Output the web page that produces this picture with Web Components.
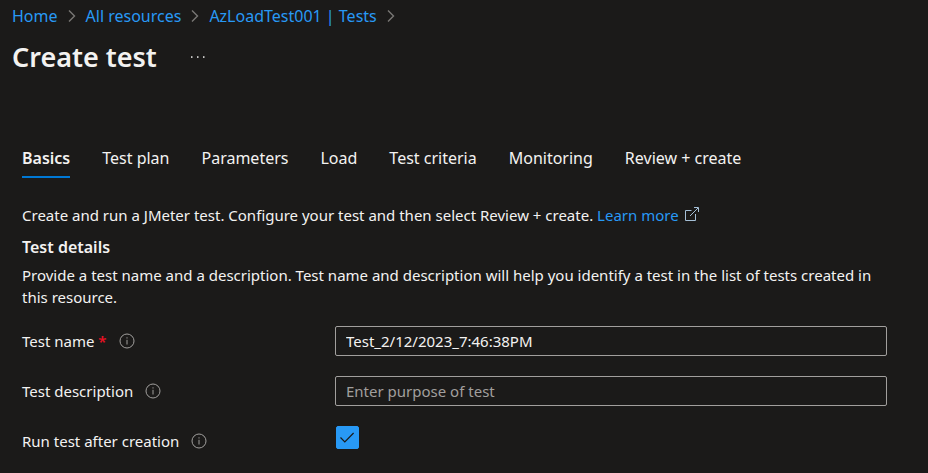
<!DOCTYPE html>
<html lang="en">
<head>
<meta charset="utf-8">
<meta name="viewport" content="width=device-width, initial-scale=1.0">
<title>Create test</title>
<style>
html {
  --bg: #1b1a19;
  --text: #f3f2f1;
  --link: #2899f5;
  --accent: #0078d4;
  --border: #a19f9d;
}
body {
  margin: 0;
  background: var(--bg);
  color: var(--text);
  font: 15px/22px "Noto Sans", "Open Sans", sans-serif;
}
</style>
</head>
<body>

<create-test-page></create-test-page>

<template id="crumb-item-template">
  <style>
    :host {
      display: flex;
      align-items: center;
      gap: 10px;
    }
    a {
      color: var(--link);
      text-decoration: none;
    }
    svg {
      display: block;
      stroke: #797775;
      fill: none;
    }
  </style>
  <a href="#"><slot></slot></a>
  <svg width="8" height="14" viewBox="0 0 8 14" stroke-width="1.4" aria-hidden="true">
    <path d="M1 1.5l5.5 5.5-5.5 5.5"/>
  </svg>
</template>

<template id="page-header-template">
  <style>
    :host {
      display: flex;
      align-items: center;
      gap: 32px;
    }
    h1 {
      margin: 0;
      font-size: 27px;
      line-height: 36px;
      font-weight: 600;
    }
    button {
      display: flex;
      padding: 8px 2px;
      border: none;
      background: none;
      cursor: pointer;
    }
    svg {
      fill: var(--text);
    }
  </style>
  <h1><slot></slot></h1>
  <button aria-label="More">
    <svg width="14" height="2" viewBox="0 0 14 2">
      <rect y=".3" width="1.5" height="1.5"/><rect x="6" y=".3" width="1.5" height="1.5"/><rect x="12" y=".3" width="1.5" height="1.5"/>
    </svg>
  </button>
</template>

<template id="tab-item-template">
  <style>
    :host {
      display: block;
    }
    button {
      display: block;
      padding: 0 0 7px;
      border: none;
      border-bottom: 2px solid transparent;
      background: none;
      color: inherit;
      font: inherit;
      font-size: 16px;
      line-height: 22px;
      cursor: pointer;
    }
    :host([selected]) button {
      border-color: var(--accent);
      font-weight: 600;
    }
  </style>
  <button role="tab"><slot></slot></button>
</template>

<template id="info-icon-template">
  <style>
    :host {
      display: block;
    }
    svg {
      display: block;
      stroke: var(--border);
      fill: none;
    }
  </style>
  <svg width="16" height="16" viewBox="0 0 16 16" aria-hidden="true">
    <circle cx="8" cy="8" r="7"/>
    <path d="M8 6.8v4.7M8 4.3v1.2"/>
  </svg>
</template>

<template id="form-field-template">
  <style>
    :host {
      display: grid;
      grid-template-columns: 313px 1fr;
      align-items: center;
      min-height: 30px;
    }
    .name {
      display: flex;
      align-items: center;
      gap: 12px;
    }
    .star {
      color: #e81123;
      font-weight: 600;
    }
    input {
      box-sizing: border-box;
      margin: 0;
    }
    input[type=text] {
      width: 100%;
      height: 30px;
      padding: 0 10px;
      border: 1px solid var(--border);
      border-radius: 2px;
      background: transparent;
      color: inherit;
      font: inherit;
    }
    input::placeholder {
      color: var(--border);
      opacity: 1;
    }
    .box {
      display: grid;
      align-self: start;
      width: 23px;
      height: 23px;
      margin: 0 1px;
    }
    .box > * {
      grid-area: 1 / 1;
    }
    input[type=checkbox] {
      appearance: none;
      width: 23px;
      height: 23px;
      border: 1px solid var(--link);
      border-radius: 2px;
    }
    input[type=checkbox]:checked {
      background: var(--link);
    }
    .box svg {
      visibility: hidden;
      pointer-events: none;
      stroke: var(--bg);
      fill: none;
    }
    input:checked + svg {
      visibility: visible;
    }
  </style>
  <div class="name">
    <label for="control"><slot></slot></label>
    <info-icon></info-icon>
  </div>
</template>

<template id="create-test-page-template">
  <style>
    :host {
      display: block;
    }
    nav {
      display: flex;
      gap: 10px;
      padding: 5px 12px 0;
    }
    crumb-item {
      font-size: 16px;
    }
    page-header {
      padding: 12px 12px 0;
    }
    main {
      padding: 72px 41px 0 22px;
    }
    .tabs {
      display: flex;
      gap: 32px;
    }
    h2 {
      margin: 0;
      font-size: 16px;
      line-height: 22px;
      font-weight: 600;
    }
    p {
      margin: 0;
    }
    .intro {
      margin: 26px 0 10px;
    }
    .intro a {
      color: var(--link);
      text-decoration: none;
    }
    .intro svg {
      margin-left: 2px;
      stroke: #a5bfd6;
      fill: none;
    }
    .details {
      margin-top: 6px;
    }
    form {
      display: grid;
      gap: 20px;
      margin-top: 18px;
    }
  </style>
  <nav aria-label="Breadcrumb">
    <crumb-item>Home</crumb-item>
    <crumb-item>All resources</crumb-item>
    <crumb-item>AzLoadTest001 | Tests</crumb-item>
  </nav>
  <page-header>Create test</page-header>
  <main>
    <div class="tabs" role="tablist">
      <tab-item selected>Basics</tab-item>
      <tab-item>Test plan</tab-item>
      <tab-item>Parameters</tab-item>
      <tab-item>Load</tab-item>
      <tab-item>Test criteria</tab-item>
      <tab-item>Monitoring</tab-item>
      <tab-item>Review + create</tab-item>
    </div>
    <p class="intro">Create and run a JMeter test. Configure your test and then select Review + create. <a href="#">Learn more
      <svg width="14" height="14" viewBox="0 0 14 14" aria-hidden="true">
        <path d="M6.5 3.5h-6v10h10V7M5 9l8-8M9 .5h4.5V5"/>
      </svg></a></p>
    <h2>Test details</h2>
    <p class="details">Provide a test name and a description. Test name and description will help you identify a test in the list of tests created in this resource.</p>
    <form>
      <form-field required value="Test_2/12/2023_7:46:38PM">Test name</form-field>
      <form-field placeholder="Enter purpose of test">Test description</form-field>
      <form-field type="checkbox" checked>Run test after creation</form-field>
    </form>
  </main>
</template>

<script>
(() => {
// Base class: clones the <template> named after the element.
class TemplateElement extends HTMLElement {
  constructor() {
    super();
    const shadowRoot = this.attachShadow({mode: 'open'});
    const tmpl = document.querySelector(`#${this.localName}-template`);
    shadowRoot.appendChild(tmpl.content.cloneNode(true));
  }
}

customElements.define('crumb-item', class extends TemplateElement {});
customElements.define('page-header', class extends TemplateElement {});
customElements.define('info-icon', class extends TemplateElement {});

customElements.define('tab-item', class extends TemplateElement {
  connectedCallback() {
    const button = this.shadowRoot.querySelector('button');
    button.setAttribute('aria-selected', this.hasAttribute('selected'));
    button.addEventListener('click', e => {
      for (const tab of this.parentNode.children) {
        tab.toggleAttribute('selected', tab === this);
        tab.shadowRoot.querySelector('button').setAttribute('aria-selected', tab === this);
      }
    });
  }
});

customElements.define('form-field', class extends TemplateElement {
  connectedCallback() {
    if (this.input) {
      return;
    }
    this.input = document.createElement('input');
    this.input.id = 'control';
    this.input.type = this.getAttribute('type') || 'text';

    if (this.input.type === 'checkbox') {
      this.input.checked = this.hasAttribute('checked');
      const box = document.createElement('div');
      box.className = 'box';
      box.innerHTML = `<svg width="23" height="23" viewBox="0 0 23 23" stroke-width="1.2" aria-hidden="true">
        <path d="M4.5 11.5l4.3 4.3 8.8-8.8"/>
      </svg>`;
      box.prepend(this.input);
      this.shadowRoot.appendChild(box);
      return;
    }

    this.input.value = this.getAttribute('value') || '';
    this.input.placeholder = this.getAttribute('placeholder') || '';
    this.shadowRoot.appendChild(this.input);

    if (this.hasAttribute('required')) {
      this.input.required = true;
      const star = document.createElement('span');
      star.className = 'star';
      star.textContent = ' *';
      this.shadowRoot.querySelector('label').appendChild(star);
    }
  }
});

customElements.define('create-test-page', class extends TemplateElement {});
})();
</script>
</body>
</html>
